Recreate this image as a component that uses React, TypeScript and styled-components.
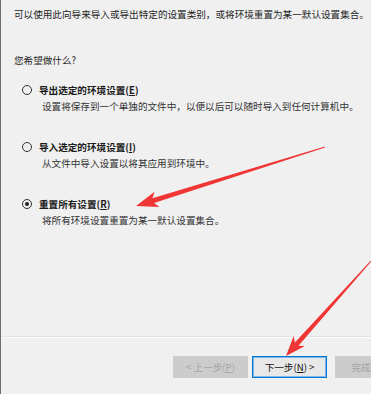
import styled, { createGlobalStyle } from "styled-components";

const GlobalStyle = createGlobalStyle`
  html, body {
    margin: 0;
    padding: 0;
    background: #f0f0f0;
  }
  body {
    font-family: "Noto Sans CJK SC", "Microsoft YaHei", sans-serif;
    overflow: hidden;
  }
`;

type Pt = [number, number];

function arrowPoints(tail: Pt, tip: Pt, headLen: number, headHalf: number, shaftHalf: number, tailHalf: number) {
  const dx = tip[0] - tail[0];
  const dy = tip[1] - tail[1];
  const len = Math.hypot(dx, dy);
  const ux = dx / len;
  const uy = dy / len;
  const nx = -uy;
  const ny = ux;
  const bx = tip[0] - ux * headLen;
  const by = tip[1] - uy * headLen;
  const jx = bx + ux * 4;
  const jy = by + uy * 4;
  const pts: Pt[] = [
    [tail[0] + nx * tailHalf, tail[1] + ny * tailHalf],
    [jx + nx * shaftHalf, jy + ny * shaftHalf],
    [bx + nx * headHalf, by + ny * headHalf],
    tip,
    [bx - nx * headHalf, by - ny * headHalf],
    [jx - nx * shaftHalf, jy - ny * shaftHalf],
    [tail[0] - nx * tailHalf, tail[1] - ny * tailHalf],
  ];
  return pts.map((p) => p.map((v) => v.toFixed(1)).join(",")).join(" ");
}

const options = [
  { label: "导出选定的环境设置", key: "E", desc: "设置将保存到一个单独的文件中，以便以后可以随时导入到任何计算机中。", checked: false },
  { label: "导入选定的环境设置", key: "I", desc: "从文件中导入设置以将其应用到环境中。", checked: false },
  { label: "重置所有设置", key: "R", desc: "将所有环境设置重置为某一默认设置集合。", checked: true },
];

const App = () => {
  return (
    <Page>
      <GlobalStyle />
      <Content>
        <Intro>可以使用此向导来导入或导出特定的设置类别，或将环境重置为某一默认设置集合。</Intro>
        <Question>您希望做什么?</Question>
        {options.map((o) => (
          <Option key={o.key}>
            <Row>
              <Radio $checked={o.checked} />
              <Label>
                {o.label}(<u>{o.key}</u>)
              </Label>
            </Row>
            <Desc>{o.desc}</Desc>
          </Option>
        ))}
      </Content>
      <Footer>
        <Buttons>
          <Button disabled>&lt; 上一步(<u>P</u>)</Button>
          <Button $primary>下一步(<u>N</u>) &gt;</Button>
          <Button disabled $far>完成</Button>
        </Buttons>
      </Footer>
      <Overlay width="371" height="394" viewBox="0 0 371 394">
        <polygon points={arrowPoints([325, 147], [136, 206], 22, 8, 2.6, 0.4)} fill="#f03535" />
        <polygon points={arrowPoints([371, 261], [286, 356], 20, 7.5, 2.4, 0.5)} fill="#f03535" />
      </Overlay>
    </Page>
  );
};

const Page = styled.div`
  position: relative;
  width: 371px;
  height: 394px;
  box-sizing: border-box;
  border-left: 1px solid #6f6f6f;
  display: flex;
  flex-direction: column;
  overflow: hidden;
  color: #262626;
  font-size: 9.6px;
`;

const Content = styled.div`
  flex: 1;
  padding: 7px 0 0 13px;
`;

const Intro = styled.div`
  line-height: 14px;
  white-space: nowrap;
`;

const Question = styled.div`
  line-height: 14px;
  margin-top: 32px;
`;

const Option = styled.div`
  margin-top: 15px;
  & + & {
    margin-top: 25px;
  }
`;

const Row = styled.div`
  display: flex;
  align-items: center;
  padding-left: 8px;
  height: 16px;
`;

const Radio = styled.span<{ $checked?: boolean }>`
  width: 10px;
  height: 10px;
  box-sizing: border-box;
  border: 1px solid #333;
  border-radius: 50%;
  margin-right: 7px;
  display: flex;
  align-items: center;
  justify-content: center;
  &::after {
    content: "";
    width: 4px;
    height: 4px;
    border-radius: 50%;
    background: #222;
    display: ${({ $checked }) => ($checked ? "block" : "none")};
  }
`;

const Label = styled.span`
  font-weight: 700;
  color: #1a1a1a;
  line-height: 16px;
`;

const Desc = styled.div`
  padding-left: 28px;
  line-height: 16px;
  color: #333;
  white-space: nowrap;
`;

const Footer = styled.div`
  height: 56px;
  border-top: 1px solid #fbfbfb;
  box-shadow: 0 -1px 0 #e2e2e2;
`;

const Buttons = styled.div`
  display: flex;
  justify-content: flex-end;
  margin-right: -16px;
  padding-top: 18px;
  gap: 4px;
`;

const Button = styled.button<{ $primary?: boolean; $far?: boolean }>`
  width: ${({ $far }) => ($far ? "52px" : "75px")};
  height: 22px;
  box-sizing: border-box;
  padding: 0;
  font-family: inherit;
  font-size: 9.6px;
  border: 1px solid ${({ $primary }) => ($primary ? "#0078d7" : "#cccccc")};
  box-shadow: ${({ $primary }) => ($primary ? "inset 0 0 0 1px rgba(0,120,215,0.45)" : "none")};
  background: ${({ $primary }) => ($primary ? "#e8e8e8" : "#cccccc")};
  color: ${({ $primary }) => ($primary ? "#111" : "#a3a3a3")};
  margin-left: ${({ $far }) => ($far ? "4px" : "0")};
  display: flex;
  align-items: center;
  justify-content: center;
`;

const Overlay = styled.svg`
  position: absolute;
  left: -1px;
  top: 0;
  pointer-events: none;
`;

export default App;
